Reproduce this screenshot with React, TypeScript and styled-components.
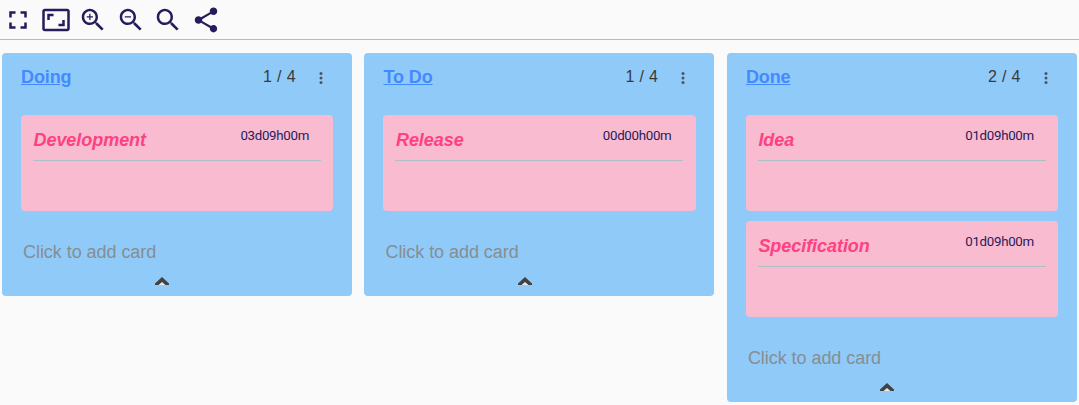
import React from 'react';
import styled, { createGlobalStyle } from 'styled-components';

const GlobalStyle = createGlobalStyle`
  *, *::before, *::after { box-sizing: border-box; }
  body {
    margin: 0;
    background: #fafafa;
    font-family: "Liberation Sans", Arial, sans-serif;
    overflow: hidden;
  }
`;

const Toolbar = styled.header`
  display: flex;
  align-items: center;
  gap: 7.6px;
  height: 40px;
  padding-left: 3px;
  border-bottom: 1px solid #b0bec5;
`;

const ToolButton = styled.button`
  display: flex;
  padding: 0;
  border: 0;
  background: none;
  color: #261b5b;
`;

const ToolIcon = styled.svg`
  width: 30px;
  height: 30px;
  fill: currentColor;
`;

const Board = styled.main`
  display: flex;
  align-items: flex-start;
  gap: 12.45px;
  padding: 13px 2px 0;
`;

const Lane = styled.section`
  flex: 0 0 350px;
  padding: 0 18.75px;
  border-radius: 4px;
  background: #90caf9;
`;

const LaneHeader = styled.div`
  display: flex;
  align-items: center;
  height: 62px;
  padding-bottom: 14px;
`;

const LaneTitle = styled.a`
  flex: 1;
  padding-left: 0.25px;
  color: #448aff;
  font-size: 18px;
  font-weight: bold;
  letter-spacing: -0.1px;
  text-decoration: underline;
`;

const Counter = styled.span`
  color: #3a3a3a;
  font-size: 16px;
  word-spacing: 0.7px;
`;

const MenuIcon = styled.svg`
  width: 16px;
  height: 16px;
  margin: 2px 4.4px 0 17.3px;
  fill: #4b5560;
`;

const CardList = styled.div`
  display: flex;
  flex-direction: column;
  gap: 10px;
`;

const Card = styled.article`
  height: 96px;
  padding: 0 12.25px;
  border-radius: 4px;
  background: #f8bbd0;
`;

const CardHeader = styled.div`
  display: flex;
  justify-content: space-between;
  height: 46px;
  padding: 14px 12px 0 0.5px;
  border-bottom: 1px solid #b0bec5;
`;

const CardTitle = styled.span`
  padding-top: 1px;
  color: #ff4081;
  font-size: 18px;
  font-style: italic;
  font-weight: bold;
  letter-spacing: -0.05px;
  line-height: 21px;
`;

const CardTime = styled.span`
  color: #261b5b;
  font-family: Roboto, sans-serif;
  font-size: 13.3px;
  letter-spacing: -0.3px;
  line-height: 13px;
`;

const LaneFooter = styled.div`
  display: flex;
  flex-direction: column;
  height: 85px;
  padding-top: 31px;
`;

const AddCard = styled.span`
  padding-left: 2.25px;
  color: #868e92;
  font-size: 18px;
  letter-spacing: -0.05px;
  line-height: 21px;
`;

const Caret = styled.svg`
  width: 14px;
  height: 8px;
  margin: 14px 0 0 134.35px;
`;

const tools = [
  { label: 'Fullscreen', path: 'M7 14H5v5h5v-2H7v-3zm-2-4h2V7h3V5H5v5zm12 7h-3v2h5v-5h-2v3zM14 5v2h3v3h2V5h-5z' },
  { label: 'Fit', path: 'M19 12h-2v3h-3v2h5v-5zM7 9h3V7H5v5h2V9zm14-6H3c-1.1 0-2 .9-2 2v14c0 1.1.9 2 2 2h18c1.1 0 2-.9 2-2V5c0-1.1-.9-2-2-2zm0 16.01H3V4.99h18v14.02z' },
  { label: 'Zoom in', path: 'M15.5 14h-.79l-.28-.27C15.41 12.59 16 11.11 16 9.5 16 5.91 13.09 3 9.5 3S3 5.91 3 9.5 5.91 16 9.5 16c1.61 0 3.09-.59 4.23-1.57l.27.28v.79l5 4.99L20.49 19l-4.99-5zm-6 0C7.01 14 5 11.99 5 9.5S7.01 5 9.5 5 14 7.01 14 9.5 11.99 14 9.5 14zm2.5-4h-2v2H9v-2H7V9h2V7h1v2h2v1z' },
  { label: 'Zoom out', path: 'M15.5 14h-.79l-.28-.27C15.41 12.59 16 11.11 16 9.5 16 5.91 13.09 3 9.5 3S3 5.91 3 9.5 5.91 16 9.5 16c1.61 0 3.09-.59 4.23-1.57l.27.28v.79l5 4.99L20.49 19l-4.99-5zm-6 0C7.01 14 5 11.99 5 9.5S7.01 5 9.5 5 14 7.01 14 9.5 11.99 14 9.5 14zM7 9h5v1H7z' },
  { label: 'Search', path: 'M15.5 14h-.79l-.28-.27C15.41 12.59 16 11.11 16 9.5 16 5.91 13.09 3 9.5 3S3 5.91 3 9.5 5.91 16 9.5 16c1.61 0 3.09-.59 4.23-1.57l.27.28v.79l5 4.99L20.49 19l-4.99-5zm-6 0C7.01 14 5 11.99 5 9.5S7.01 5 9.5 5 14 7.01 14 9.5 11.99 14 9.5 14z' },
  { label: 'Share', path: 'M18 16.08c-.76 0-1.44.3-1.96.77L8.91 12.7c.05-.23.09-.46.09-.7s-.04-.47-.09-.7l7.05-4.11c.54.5 1.25.81 2.04.81 1.66 0 3-1.34 3-3s-1.34-3-3-3-3 1.34-3 3c0 .24.04.47.09.7L8.04 9.81C7.5 9.31 6.79 9 6 9c-1.66 0-3 1.34-3 3s1.34 3 3 3c.79 0 1.5-.31 2.04-.81l7.12 4.16c-.05.21-.08.43-.08.65 0 1.61 1.31 2.92 2.92 2.92s2.92-1.31 2.92-2.92-1.31-2.92-2.92-2.92z' },
];

type CardData = { title: string; time: string };
type LaneData = { title: string; cards: CardData[] };

const LIMIT = 4;

const lanes: LaneData[] = [
  { title: 'Doing', cards: [{ title: 'Development', time: '03d09h00m' }] },
  { title: 'To Do', cards: [{ title: 'Release', time: '00d00h00m' }] },
  {
    title: 'Done',
    cards: [
      { title: 'Idea', time: '01d09h00m' },
      { title: 'Specification', time: '01d09h00m' },
    ],
  },
];

export default function App() {
  return (
    <>
      <GlobalStyle />
      <Toolbar>
        {tools.map((tool) => (
          <ToolButton key={tool.label} aria-label={tool.label}>
            <ToolIcon viewBox="0 0 24 24"><path d={tool.path} /></ToolIcon>
          </ToolButton>
        ))}
      </Toolbar>
      <Board>
        {lanes.map((lane) => (
          <Lane key={lane.title}>
            <LaneHeader>
              <LaneTitle>{lane.title}</LaneTitle>
              <Counter>{`${lane.cards.length} / ${LIMIT}`}</Counter>
              <MenuIcon viewBox="0 0 16 16">
                <circle cx="8" cy="3.5" r="1.5" />
                <circle cx="8" cy="8" r="1.5" />
                <circle cx="8" cy="12.5" r="1.5" />
              </MenuIcon>
            </LaneHeader>
            <CardList>
              {lane.cards.map((card) => (
                <Card key={card.title}>
                  <CardHeader>
                    <CardTitle>{card.title}</CardTitle>
                    <CardTime>{card.time}</CardTime>
                  </CardHeader>
                </Card>
              ))}
            </CardList>
            <LaneFooter>
              <AddCard>Click to add card</AddCard>
              <Caret viewBox="0 0 14 8">
                <path d="M7 4 11 8H3z" fill="#e8e8e8" />
                <path d="M7 0 14 6.5V8H10.5L7 5 3.5 8H0V6.5z" fill="#424242" />
              </Caret>
            </LaneFooter>
          </Lane>
        ))}
      </Board>
    </>
  );
}
